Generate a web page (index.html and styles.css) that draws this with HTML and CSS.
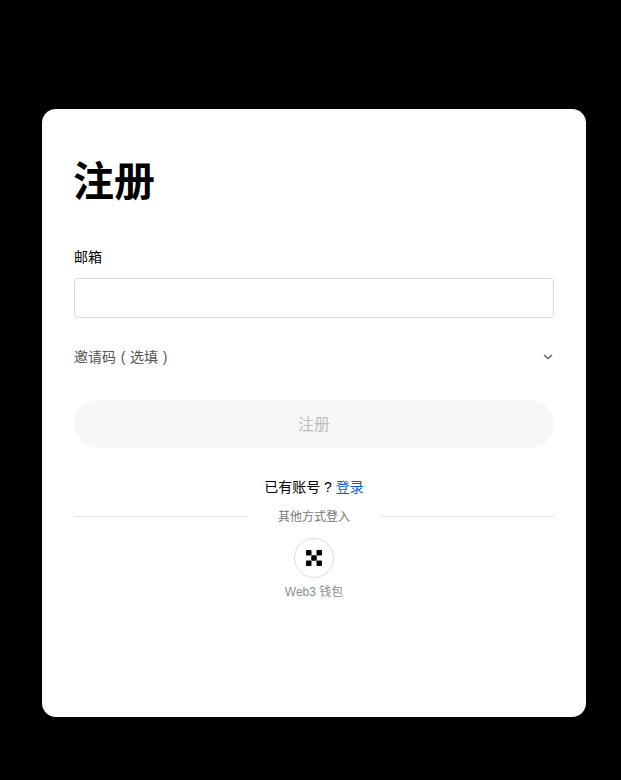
FILE: index.html
```html
<!DOCTYPE html>
<html lang="zh-CN">
<head>
<meta charset="utf-8">
<title>注册</title>
<link rel="stylesheet" href="styles.css">
</head>
<body>
<main class="card">
  <h1 class="title">注册</h1>
  <label class="label" for="email">邮箱</label>
  <input class="input" id="email" type="text">
  <div class="invite">
    <span class="invite-text">邀请码 ( 选填 )</span>
    <svg class="chevron" width="10" height="6" viewBox="0 0 10 6"><path d="M1 1l4 3.600L9 1" fill="none" stroke="#666" stroke-width="1.500"/></svg>
  </div>
  <button class="submit" type="button">注册</button>
  <p class="login">已有账号 ? <a href="#">登录</a></p>
  <div class="divider"><span class="line"></span><span class="divider-text">其他方式登入</span><span class="line"></span></div>
  <div class="wallet">
    <span class="wallet-icon">
      <svg width="16" height="16" viewBox="0 0 16 16"><g fill="#000"><rect x="0" y="0" width="5.500" height="5.500" rx=".8"/><rect x="10.500" y="0" width="5.500" height="5.500" rx=".8"/><rect x="5.250" y="5.250" width="5.500" height="5.500" rx=".8"/><rect x="0" y="10.500" width="5.500" height="5.500" rx=".8"/><rect x="10.500" y="10.500" width="5.500" height="5.500" rx=".8"/></g></svg>
    </span>
    <span class="wallet-text">Web3 钱包</span>
  </div>
</main>
</body>
</html>
```
FILE: styles.css
```css
* { box-sizing: border-box; }
html, body { height: 100%; }
body {
  margin: 0;
  background: #000;
  padding: 109px 35px 0 42px;
  font-family: "Liberation Sans", "Noto Sans CJK SC", sans-serif;
  overflow: hidden;
}
.card {
  width: 544px;
  height: 608px;
  background: #fff;
  border-radius: 14px;
  padding: 49px 32px 0;
  display: flex;
  flex-direction: column;
}
.title {
  margin: 0 0 0 -1px;
  font-size: 41px;
  line-height: 48px;
  font-weight: 700;
  color: #000;
}
.label {
  margin-top: 41px;
  font-size: 14px;
  line-height: 20px;
  color: #000;
}
.input {
  display: block;
  width: 480px;
  height: 40px;
  margin-top: 11px;
  border: 1px solid #d9d9d9;
  border-radius: 4px;
  background: #fff;
  outline: none;
}
.invite {
  margin-top: 29px;
  height: 20px;
  display: flex;
  align-items: center;
  justify-content: space-between;
  font-size: 14px;
  line-height: 20px;
  color: #555;
}
.invite-text { word-spacing: .8px; }
.chevron { margin-right: 1px; }
.submit {
  margin-top: 33px;
  height: 48px;
  width: 480px;
  border: 0;
  border-radius: 24px;
  background: #f7f7f7;
  color: #bdbdbd;
  font-family: inherit;
  font-size: 16px;
  padding: 0 0 2px;
}
.login {
  margin: 29px 0 0;
  text-align: center;
  font-size: 14px;
  line-height: 20px;
  color: #000;
}
.login a { color: #0a5cd6; text-decoration: none; }
.divider {
  display: flex;
  align-items: center;
  height: 20px;
  margin-top: 9px;
  font-size: 12px;
  color: #777;
}
.line { flex: 1; height: 1px; background: #e6e6e6; }
.divider-text { padding: 2px 30px 0; line-height: 20px; }
.wallet {
  margin-top: 12px;
  display: flex;
  flex-direction: column;
  align-items: center;
}
.wallet-icon {
  width: 40px;
  height: 40px;
  border: 1px solid #dcdcdc;
  border-radius: 50%;
  display: flex;
  align-items: center;
  justify-content: center;
}
.wallet-text {
  margin-top: 4px;
  font-size: 12px;
  line-height: 20px;
  color: #8c8c8c;
}
```
